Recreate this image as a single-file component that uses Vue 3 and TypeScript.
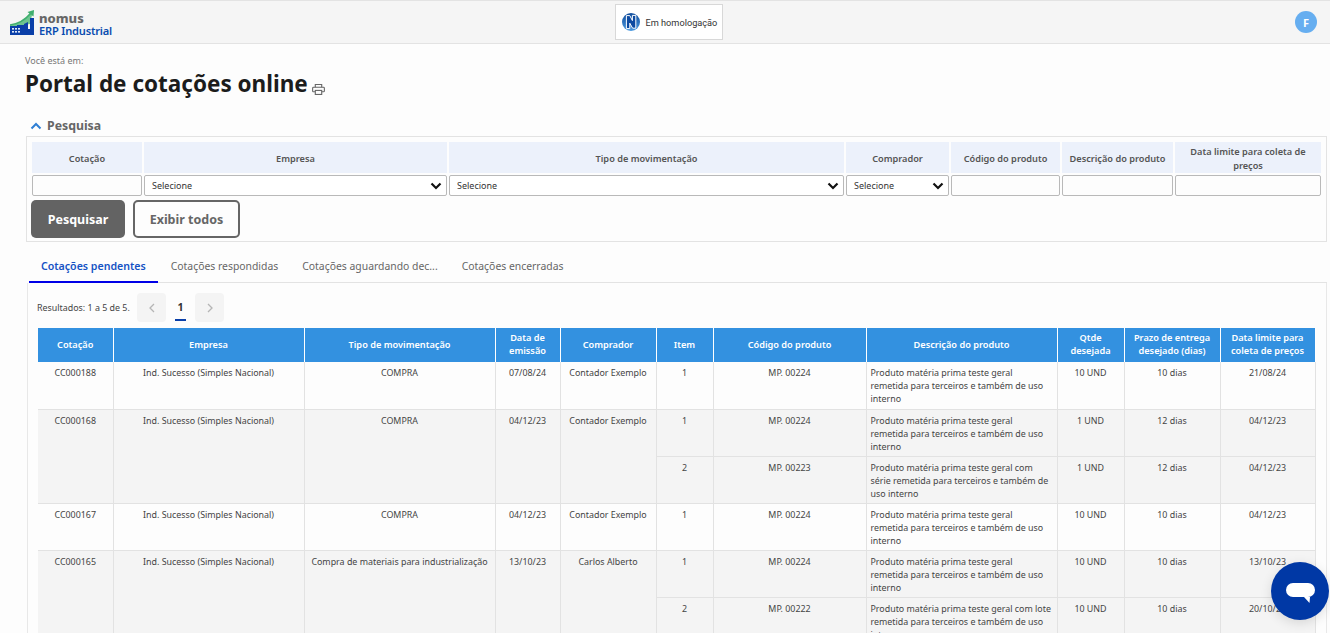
<script setup lang="ts">
interface Item { n: number; code: string; desc: string; qty: string; prazo: string; limite: string }
interface Quote { id: string; empresa: string; tipo: string; emissao: string; comprador: string; items: Item[] }

const filters = [
  { label: 'Cotação', kind: 'input' },
  { label: 'Empresa', kind: 'select' },
  { label: 'Tipo de movimentação', kind: 'select' },
  { label: 'Comprador', kind: 'select' },
  { label: 'Código do produto', kind: 'input' },
  { label: 'Descrição do produto', kind: 'input' },
  { label: 'Data limite para coleta de preços', kind: 'input' },
]
const tabs = ['Cotações pendentes', 'Cotações respondidas', 'Cotações aguardando dec...', 'Cotações encerradas']
const heads = ['Cotação', 'Empresa', 'Tipo de movimentação', 'Data de emissão', 'Comprador', 'Item', 'Código do produto', 'Descrição do produto', 'Qtde desejada', 'Prazo de entrega desejado (dias)', 'Data limite para coleta de preços']
const cols = [75, 191, 191, 65, 96, 57, 153, 191, 67, 96, 95]

const d1 = 'Produto matéria prima teste geral remetida para terceiros e também de uso interno'
const d2 = 'Produto matéria prima teste geral com série remetida para terceiros e também de uso interno'
const d3 = 'Produto matéria prima teste geral com lote remetida para terceiros e também de uso interno'
const emp = 'Ind. Sucesso (Simples Nacional)'
const quotes: Quote[] = [
  { id: 'CC000188', empresa: emp, tipo: 'COMPRA', emissao: '07/08/24', comprador: 'Contador Exemplo', items: [
    { n: 1, code: 'MP. 00224', desc: d1, qty: '10 UND', prazo: '10 dias', limite: '21/08/24' } ] },
  { id: 'CC000168', empresa: emp, tipo: 'COMPRA', emissao: '04/12/23', comprador: 'Contador Exemplo', items: [
    { n: 1, code: 'MP. 00224', desc: d1, qty: '1 UND', prazo: '12 dias', limite: '04/12/23' },
    { n: 2, code: 'MP. 00223', desc: d2, qty: '1 UND', prazo: '12 dias', limite: '04/12/23' } ] },
  { id: 'CC000167', empresa: emp, tipo: 'COMPRA', emissao: '04/12/23', comprador: 'Contador Exemplo', items: [
    { n: 1, code: 'MP. 00224', desc: d1, qty: '10 UND', prazo: '10 dias', limite: '04/12/23' } ] },
  { id: 'CC000165', empresa: emp, tipo: 'Compra de materiais para industrialização', emissao: '13/10/23', comprador: 'Carlos Alberto', items: [
    { n: 1, code: 'MP. 00224', desc: d1, qty: '10 UND', prazo: '10 dias', limite: '13/10/23' },
    { n: 2, code: 'MP. 00222', desc: d3, qty: '10 UND', prazo: '10 dias', limite: '20/10/23' } ] },
]
</script>

<template>
  <div class="page">
    <header class="topbar">
      <div class="logo">
        <svg width="25" height="25" viewBox="0 0 25 25" class="logo-mark">
          <path d="M0 15 C8 14 15 10 20 3 L22 5 L20 14 L14 15 L6 17 L0 17 Z" fill="#6cc48e" />
          <path d="M0 15 C8 14 15 10 20.5 3.5" fill="none" stroke="#3fae6e" stroke-width="1.6" />
          <path d="M17.5 2 L24 0 L23.5 6.5 Z" fill="#3fae6e" />
          <path d="M0 16 L7 16 L7 15 L14 15 L14 14 L18 12 L18 19 L20 19 L20 8 L24 8 L24 25 L0 25 Z" fill="#0a3fa8" />
          <g fill="#dfe8f8">
            <rect x="2" y="18" width="2" height="1.6" /><rect x="5" y="18" width="2" height="1.6" /><rect x="8" y="18" width="2" height="1.6" />
            <rect x="2" y="21" width="2" height="1.6" /><rect x="5" y="21" width="2" height="1.6" /><rect x="8" y="21" width="2" height="1.6" />
          </g>
        </svg>
        <div class="logo-text">
          <span class="logo-a">nomus</span>
          <span class="logo-b">ERP Industrial</span>
        </div>
      </div>
      <div class="env">
        <svg width="18" height="18" viewBox="0 0 18 18">
          <defs>
            <linearGradient id="envg" x1="0" y1="0" x2="0" y2="1">
              <stop offset="0" stop-color="#0f4c9c" />
              <stop offset="1" stop-color="#4d9be0" />
            </linearGradient>
          </defs>
          <circle cx="9" cy="9" r="9" fill="url(#envg)" />
          <path d="M4.4 2.6 L7.8 2.6 L10.4 7.6 L10.4 2.4 L13.8 2.4 L13.8 15.2 L10.6 15.2 L7.8 10.2 L7.8 15.6 L4.4 15.6 Z" fill="#0d4aa0" stroke="#fff" stroke-width="1" />
        </svg>
        <span>Em homologação</span>
      </div>
      <div class="avatar">F</div>
    </header>

    <main class="content">
      <div class="crumb">Você está em:</div>
      <div class="title-row">
        <h1>Portal de cotações online</h1>
        <svg class="print" width="13" height="11" viewBox="0 0 14 12" fill="none" stroke="#666" stroke-width="1.2">
          <path d="M3.5 3.5 V0.6 H10.5 V3.5" />
          <rect x="0.6" y="3.5" width="12.8" height="5" rx="1" />
          <rect x="3.5" y="7" width="7" height="4.4" fill="#fdfdfd" />
        </svg>
      </div>

      <div class="section-head">
        <svg width="12" height="8" viewBox="0 0 12 8" fill="none" stroke="#2f7fd4" stroke-width="2"><path d="M1.5 6.5 L6 2 L10.5 6.5" /></svg>
        <span>Pesquisa</span>
      </div>

      <section class="search">
        <div class="filters">
          <div v-for="f in filters" :key="f.label" class="fhead">{{ f.label }}</div>
          <template v-for="f in filters" :key="f.label + '-c'">
            <div v-if="f.kind === 'input'" class="field"></div>
            <div v-else class="field sel">
              <span>Selecione</span>
              <svg width="12" height="8" viewBox="0 0 12 8" fill="none" stroke="#111" stroke-width="2.2"><path d="M1.5 1.5 L6 6 L10.5 1.5" /></svg>
            </div>
          </template>
        </div>
        <div class="actions">
          <button class="btn primary">Pesquisar</button>
          <button class="btn outline">Exibir todos</button>
        </div>
      </section>

      <nav class="tabs">
        <div v-for="(t, i) in tabs" :key="t" class="tab" :class="{ active: i === 0 }">{{ t }}</div>
      </nav>

      <section class="panel">
        <div class="pager">
          <span class="results">Resultados: 1 a 5 de 5.</span>
          <span class="pg-btn">
            <svg width="6" height="10" viewBox="0 0 6 10" fill="none" stroke="#b5b5b5" stroke-width="1.3"><path d="M5 1 L1 5 L5 9" /></svg>
          </span>
          <span class="pg-num">1</span>
          <span class="pg-btn">
            <svg width="6" height="10" viewBox="0 0 6 10" fill="none" stroke="#b5b5b5" stroke-width="1.3"><path d="M1 1 L5 5 L1 9" /></svg>
          </span>
        </div>

        <table class="grid">
          <colgroup><col v-for="(c, i) in cols" :key="i" :style="{ width: c + 'px' }" /></colgroup>
          <thead>
            <tr><th v-for="h in heads" :key="h">{{ h }}</th></tr>
          </thead>
          <tbody v-for="(q, qi) in quotes" :key="q.id" :class="{ alt: qi % 2 === 1 }">
            <tr v-for="(it, ii) in q.items" :key="it.n">
              <template v-if="ii === 0">
                <td :rowspan="q.items.length">{{ q.id }}</td>
                <td :rowspan="q.items.length">{{ q.empresa }}</td>
                <td :rowspan="q.items.length">{{ q.tipo }}</td>
                <td :rowspan="q.items.length">{{ q.emissao }}</td>
                <td :rowspan="q.items.length">{{ q.comprador }}</td>
              </template>
              <td>{{ it.n }}</td>
              <td>{{ it.code }}</td>
              <td class="left">{{ it.desc }}</td>
              <td>{{ it.qty }}</td>
              <td>{{ it.prazo }}</td>
              <td>{{ it.limite }}</td>
            </tr>
          </tbody>
        </table>
      </section>
    </main>

    <div class="chat">
      <svg width="30" height="22" viewBox="0 0 30 22">
        <rect x="0" y="0" width="29" height="14" rx="7" fill="#fff" />
        <path d="M18 14 L24 14 L23.5 20 Z" fill="#fff" />
      </svg>
    </div>
  </div>
</template>

<style>
html, body { margin: 0; overflow: hidden; background: #fdfdfd; }
</style>

<style scoped>
.page {
  height: 633px;
  overflow: hidden;
  position: relative;
  font-family: "Noto Sans", "Open Sans", sans-serif;
  color: #444;
  background: #fdfdfd;
}
.topbar {
  box-sizing: border-box;
  height: 44px;
  background: #f5f5f5;
  border-top: 1px solid #e3e3e3;
  border-bottom: 1px solid #e3e3e3;
  display: grid;
  grid-template-columns: 1fr auto 1fr;
  align-items: center;
  padding: 0 13px 0 10px;
}
.logo { display: flex; align-items: center; gap: 4px; }
.logo-text { display: flex; flex-direction: column; padding-top: 4px; }
.logo-a { font-size: 13px; font-weight: 800; color: #666; line-height: 12px; }
.logo-b { font-size: 11.1px; font-weight: 600; color: #0a4cb0; letter-spacing: -0.2px; line-height: 13px; }
.env {
  box-sizing: border-box;
  width: 108px;
  height: 36px;
  margin-left: 10px;
  background: #fff;
  border: 1px solid #d8d8d8;
  display: flex;
  align-items: center;
  gap: 6px;
  padding-left: 6px;
  font-family: "Roboto", sans-serif;
  font-size: 9.2px;
  color: #333;
  white-space: nowrap;
}
.avatar {
  justify-self: end;
  width: 22px;
  height: 22px;
  border-radius: 50%;
  background: #66aef0;
  color: #fff;
  font-size: 11px;
  font-weight: 700;
  display: flex;
  align-items: center;
  justify-content: center;
}
.content { padding: 10px 3px 0 25px; }
.crumb { font-size: 9px; line-height: 14px; color: #777; }
.title-row { display: flex; align-items: flex-end; gap: 4px; height: 30px; padding-top: 1px; }
h1 { margin: 0; font-size: 22.5px; line-height: 30px; font-weight: 700; color: #1c1c1c; }
.print { margin-bottom: 4px; }
.section-head {
  display: flex;
  align-items: center;
  gap: 5px;
  padding-left: 5px;
  margin-top: 18px;
  height: 17px;
  font-size: 12.3px;
  font-weight: 700;
  color: #666;
}
.search {
  box-sizing: border-box;
  margin: 2px 0 0 1px;
  height: 106px;
  border: 1px solid #e3e3e3;
  padding: 5px 5px 0 5px;
  background: #fdfdfd;
}
.filters {
  display: grid;
  grid-template-columns: 110px 303px 395px 103px 109px 111px 146px;
  grid-template-rows: 31px 21px;
  column-gap: 2px;
  row-gap: 2px;
}
.fhead {
  background: #ecf1fb;
  display: flex;
  align-items: center;
  justify-content: center;
  text-align: center;
  font-size: 9.2px;
  line-height: 14px;
  font-weight: 600;
  color: #555;
  padding: 3px 2px 0;
}
.field {
  box-sizing: border-box;
  border: 1px solid #b9b9b9;
  border-radius: 2px;
  background: #fdfdfd;
}
.sel {
  display: flex;
  align-items: center;
  justify-content: space-between;
  padding: 0 4px 0 7px;
  background: #fff;
  font-size: 9px;
  color: #333;
}
.actions { display: flex; gap: 8px; margin-top: 4px; margin-left: -1px; }
.btn {
  box-sizing: border-box;
  height: 38px;
  border-radius: 5px;
  font-family: inherit;
  font-size: 12.5px;
  font-weight: 700;
  padding: 0;
}
.primary { width: 94px; background: #636363; border: 0; color: #fff; }
.outline { width: 107px; background: #fdfdfd; border: 2px solid #666; color: #666; }
.tabs {
  display: flex;
  height: 33px;
  margin: 8px 0 0 4px;
  border-bottom: 1px solid #e3e3e3;
  box-sizing: border-box;
}
.tab {
  box-sizing: border-box;
  height: 33px;
  padding: 0 12px;
  line-height: 32px;
  font-size: 10.4px;
  color: #666;
  white-space: nowrap;
}
.active { color: #1552c4; font-size: 10.6px; font-weight: 600; margin-right: 1px; border-bottom: 2px solid #0000e6; }
.panel {
  margin-left: 2px;
  border-left: 1px solid #e8e8e8;
  border-right: 1px solid #e8e8e8;
  padding: 10px 10px 0 10px;
}
.pager { display: flex; align-items: center; height: 29px; font-size: 8.9px; color: #444; margin-left: -1px; }
.results { width: 100px; white-space: nowrap; }
.pg-btn {
  width: 29px;
  height: 29px;
  border-radius: 4px;
  background: #f4f4f4;
  display: flex;
  align-items: center;
  justify-content: center;
}
.pg-num {
  width: 29px;
  height: 29px;
  box-sizing: border-box;
  text-align: center;
  line-height: 29px;
  font-size: 10.5px;
  font-weight: 700;
  color: #333;
  position: relative;
}
.pg-num::after {
  content: "";
  position: absolute;
  left: 9px;
  right: 9px;
  bottom: 1px;
  height: 2px;
  background: #0a3fa8;
}
.grid {
  margin-top: 6px;
  border-collapse: collapse;
  table-layout: fixed;
  width: 1277px;
  font-size: 8.9px;
  color: #444;
}
.grid th {
  box-sizing: border-box;
  height: 34px;
  padding: 0 3px 2px;
  background: #3391e0;
  color: #fff;
  font-weight: 600;
  font-size: 9.2px;
  line-height: 13px;
  border-left: 1px solid #fff;
  border-right: 1px solid #fff;
}
.grid th:first-child { border-left: 0; }
.grid td {
  box-sizing: border-box;
  height: 47px;
  padding: 4px 3px 0;
  vertical-align: top;
  text-align: center;
  line-height: 13px;
  border: 1px solid #e2e2e2;
  border-top: 0;
}
.grid td:first-child { border-left: 0; }
.grid td.left { text-align: left; padding-left: 4px; padding-right: 5px; }
.grid tbody.alt td { background: #f4f4f4; }
.chat {
  position: absolute;
  left: 1271px;
  top: 562px;
  width: 58px;
  height: 58px;
  border-radius: 50%;
  background: #0038a5;
  box-shadow: 0 3px 12px rgba(0, 0, 0, 0.12);
  display: flex;
  align-items: center;
  justify-content: center;
}
.chat svg { margin-top: 6px; margin-left: 1px; }
</style>
